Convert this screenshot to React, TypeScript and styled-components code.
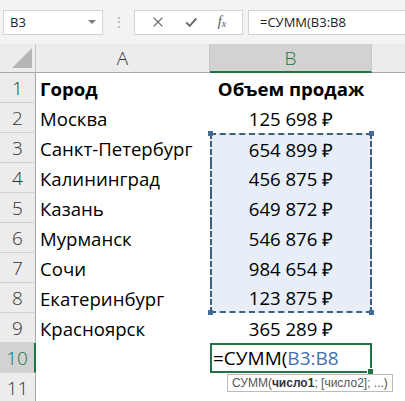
import React from 'react'
import styled, { createGlobalStyle, css } from 'styled-components'

const GlobalStyle = createGlobalStyle`
  html, body {
    margin: 0;
    padding: 0;
    background: #ffffff;
    font-family: 'Liberation Sans', Arial, sans-serif;
    overflow: hidden;
  }
`

const cellFont = `'Open Sans', 'Liberation Sans', sans-serif`

const rows: { city: string; sales: string }[] = [
  { city: 'Москва', sales: '125 698 ₽' },
  { city: 'Санкт-Петербург', sales: '654 899 ₽' },
  { city: 'Калининград', sales: '456 875 ₽' },
  { city: 'Казань', sales: '649 872 ₽' },
  { city: 'Мурманск', sales: '546 876 ₽' },
  { city: 'Сочи', sales: '984 654 ₽' },
  { city: 'Екатеринбург', sales: '123 875 ₽' },
  { city: 'Красноярск', sales: '365 289 ₽' },
]

export default function App() {
  return (
    <>
      <GlobalStyle />
      <Page>
        <FormulaBar>
          <NameBox>
            <span>B3</span>
            <Caret />
          </NameBox>
          <Grip>⋮</Grip>
          <ButtonGroup>
            <BarIcon viewBox='0 0 16 16'>
              <path d='M3 3 L13 13 M13 3 L3 13' stroke='#6b6b6b' strokeWidth='1.6' fill='none' />
            </BarIcon>
            <BarIcon viewBox='0 0 16 16'>
              <path d='M2.5 8.5 L6.5 12.5 L14 4' stroke='#6b6b6b' strokeWidth='2.2' fill='none' />
            </BarIcon>
            <Fx>
              f<sub>x</sub>
            </Fx>
          </ButtonGroup>
          <FormulaInput>=СУММ(B3:B8</FormulaInput>
        </FormulaBar>

        <Sheet>
          <Corner>
            <CornerTriangle />
          </Corner>
          <ColHeader>A</ColHeader>
          <ColHeader $active>B</ColHeader>
          <ColHeader $last />

          <RowHeader>1</RowHeader>
          <Cell $bold>Город</Cell>
          <Cell $bold $center>
            Объем продаж
          </Cell>
          <Cell />

          {rows.map((r, i) => {
            const n = i + 2
            const sel = n >= 3 && n <= 8
            return (
              <React.Fragment key={n}>
                <RowHeader>{n}</RowHeader>
                <Cell>{r.city}</Cell>
                <Cell $center $sel={sel} $top={n === 3} $bottom={n === 8}>
                  {r.sales}
                  {n === 3 && (
                    <>
                      <Handle $pos='tl' />
                      <Handle $pos='tr' />
                    </>
                  )}
                  {n === 8 && (
                    <>
                      <Handle $pos='bl' />
                      <Handle $pos='br' />
                    </>
                  )}
                </Cell>
                <Cell />
              </React.Fragment>
            )
          })}

          <RowHeader $active>10</RowHeader>
          <Cell />
          <EditCell>
            =СУММ(<Ref>B3:B8</Ref>
            <FillHandle />
            <Tip>
              СУММ(<b>число1</b>; [число2]; ...)
            </Tip>
          </EditCell>
          <Cell />

          <RowHeader>11</RowHeader>
          <Cell />
          <Cell />
          <Cell />
        </Sheet>
      </Page>
    </>
  )
}

const Page = styled.div`
  width: 405px;
  height: 401px;
  overflow: hidden;
  background: #ffffff;
`

const FormulaBar = styled.div`
  display: flex;
  align-items: center;
  height: 44px;
  padding: 0 0 0 3px;
  background: #f3f3f3;
  box-sizing: border-box;
`

const boxBase = css`
  height: 25px;
  box-sizing: border-box;
  background: #ffffff;
  border: 1px solid #d4d4d4;
  display: flex;
  align-items: center;
`

const NameBox = styled.div`
  ${boxBase};
  width: 100px;
  padding: 0 6px 0 6px;
  justify-content: space-between;
  font-family: ${cellFont};
  font-size: 13px;
  color: #222;
`

const Caret = styled.span`
  width: 0;
  height: 0;
  border-left: 4px solid transparent;
  border-right: 4px solid transparent;
  border-top: 4px solid #7a7a7a;
`

const Grip = styled.div`
  width: 31px;
  text-align: center;
  color: #b0b0b0;
  font-size: 14px;
`

const ButtonGroup = styled.div`
  ${boxBase};
  width: 109px;
  justify-content: space-around;
  padding: 0 6px;
`

const BarIcon = styled.svg`
  width: 14px;
  height: 14px;
`

const Fx = styled.span`
  font-family: 'Liberation Serif', 'Times New Roman', serif;
  font-style: italic;
  font-size: 14px;
  color: #555;
  sub {
    font-size: 10px;
    vertical-align: -1px;
  }
`

const FormulaInput = styled.div`
  ${boxBase};
  flex: 1;
  margin-left: 5px;
  border-right: none;
  padding-left: 11px;
  font-family: ${cellFont};
  font-size: 13px;
  color: #222;
`

const Sheet = styled.div`
  display: grid;
  grid-template-columns: 36px 174px 162px 1fr;
  grid-template-rows: 29px;
  grid-auto-rows: 30px;
  font-family: ${cellFont};
`

const Corner = styled.div`
  background: #ececec;
  border-right: 1px solid #c6c6c6;
  border-bottom: 1px solid #a8a8a8;
  display: flex;
  align-items: flex-end;
  justify-content: flex-end;
  padding: 0 3px 4px 0;
`

const CornerTriangle = styled.div`
  width: 0;
  height: 0;
  border-left: 20px solid transparent;
  border-bottom: 20px solid #b5b5b5;
`

const ColHeader = styled.div<{ $active?: boolean; $last?: boolean }>`
  display: flex;
  align-items: center;
  justify-content: center;
  font-size: 19px;
  font-weight: 300;
  color: #333;
  background: #ececec;
  border-right: 1px solid #c6c6c6;
  border-bottom: 1px solid #a8a8a8;
  ${(p) =>
    p.$active &&
    css`
      background: #d2d2d2;
      color: #217346;
      border-bottom: 2px solid #217346;
    `}
  ${(p) => p.$last && 'border-right: none;'}
`

const RowHeader = styled.div<{ $active?: boolean }>`
  display: flex;
  align-items: center;
  justify-content: center;
  font-size: 19px;
  font-weight: 300;
  color: #333;
  background: #ececec;
  border-right: 1px solid #a8a8a8;
  border-bottom: 1px solid #d0d0d0;
  box-sizing: border-box;
  ${(p) =>
    p.$active &&
    css`
      background: #d2d2d2;
      color: #217346;
      border-right: 2px solid #217346;
    `}
`

const Cell = styled.div<{
  $bold?: boolean
  $center?: boolean
  $sel?: boolean
  $top?: boolean
  $bottom?: boolean
}>`
  position: relative;
  display: flex;
  align-items: center;
  justify-content: ${(p) => (p.$center ? 'center' : 'flex-start')};
  padding: 0 4px;
  box-sizing: border-box;
  font-size: 18.6px;
  font-weight: ${(p) => (p.$bold ? 700 : 400)};
  color: #000;
  white-space: nowrap;
  ${(p) =>
    p.$sel &&
    css`
      background: #e7eef8;
      border-left: 2px dashed #3c5f82;
      border-right: 2px dashed #3c5f82;
    `}
  ${(p) => p.$top && 'border-top: 2px dashed #3c5f82;'}
  ${(p) => p.$bottom && 'border-bottom: 2px dashed #3c5f82;'}
`

const handlePos = {
  tl: 'top: -4px; left: -4px;',
  tr: 'top: -4px; right: -4px;',
  bl: 'bottom: -4px; left: -4px;',
  br: 'bottom: -4px; right: -4px;',
}

const Handle = styled.span<{ $pos: keyof typeof handlePos }>`
  position: absolute;
  width: 5px;
  height: 5px;
  background: #44699a;
  ${(p) => handlePos[p.$pos]}
`

const EditCell = styled.div`
  position: relative;
  display: flex;
  align-items: center;
  padding: 0 1px;
  border: 2px solid #217346;
  box-sizing: border-box;
  font-size: 19px;
  color: #000;
  white-space: nowrap;
`

const Ref = styled.span`
  color: #3f6fb0;
`

const FillHandle = styled.span`
  position: absolute;
  right: -4px;
  bottom: -4px;
  width: 5px;
  height: 5px;
  background: #217346;
  border: 1px solid #ffffff;
`

const Tip = styled.div`
  position: absolute;
  top: calc(100% + 3px);
  left: 15px;
  padding: 1px 4px;
  background: #ffffff;
  border: 1px solid #bcbcbc;
  font-family: 'Liberation Sans', Arial, sans-serif;
  font-size: 12px;
  color: #555;
  white-space: nowrap;
  z-index: 2;
  b {
    color: #333;
  }
`
